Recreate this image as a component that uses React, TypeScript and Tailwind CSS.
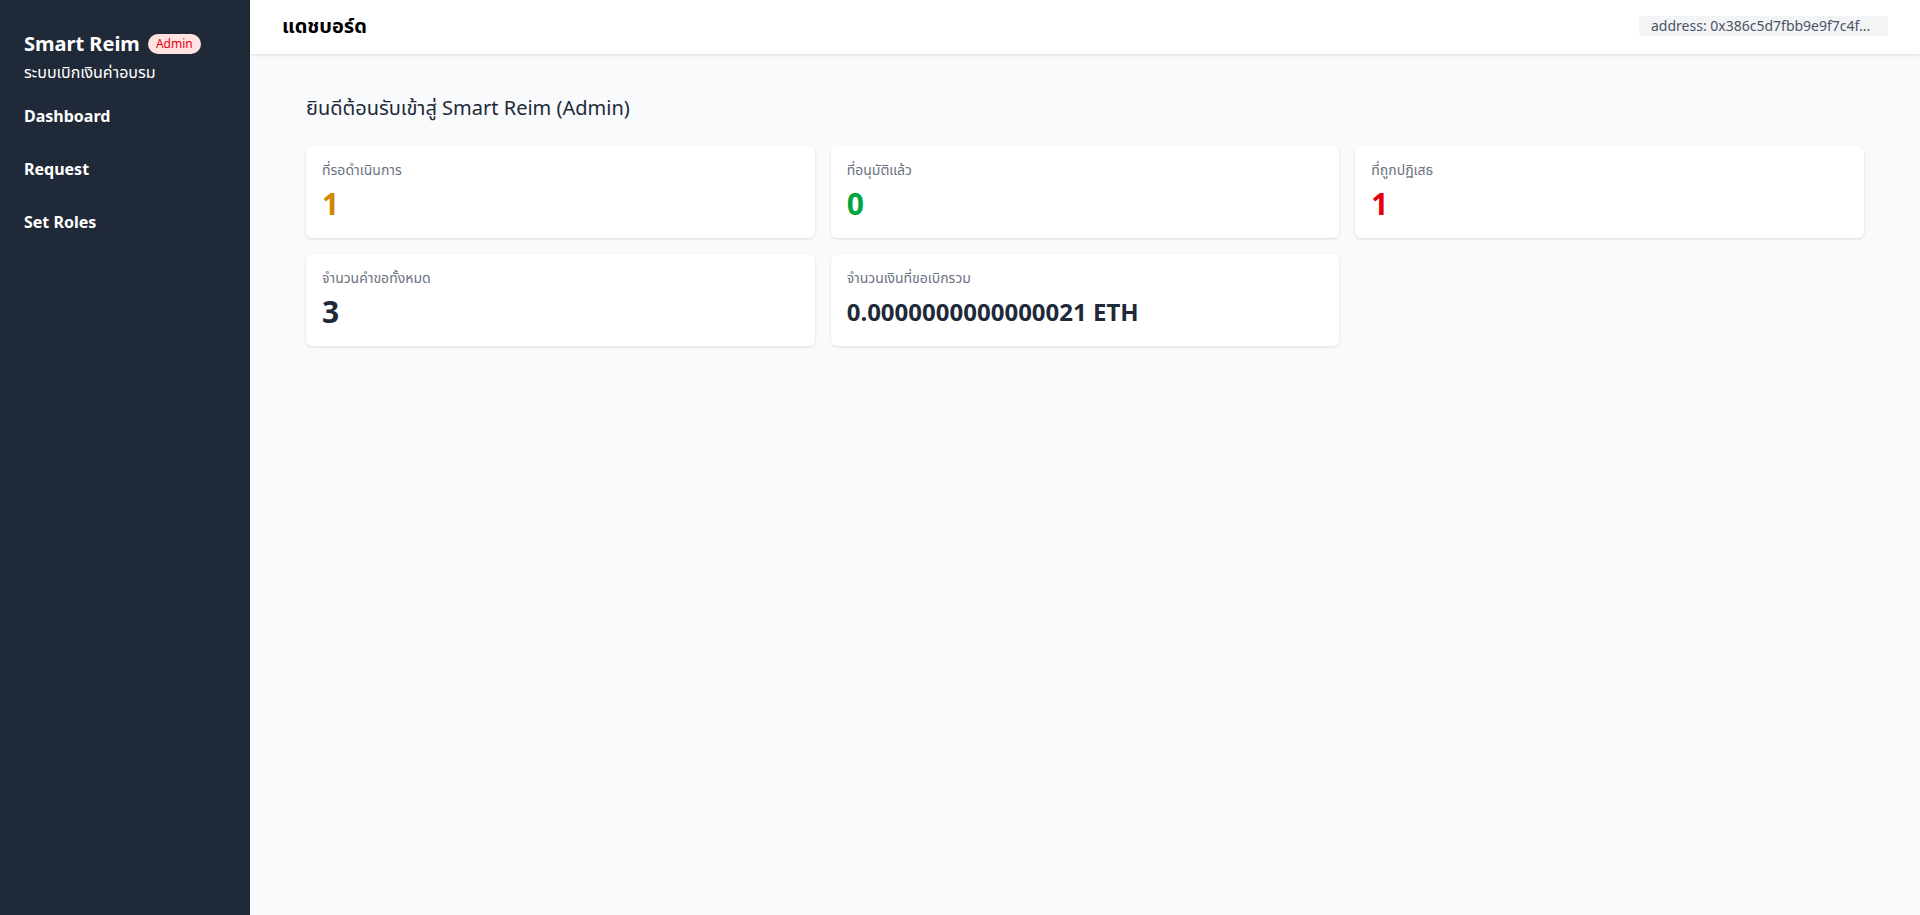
import React from "react";

function StatCard({ label, value, color, size }: { label: string; value: string; color: string; size: string }) {
  return (
    <div className="bg-white rounded-md shadow-[0_1px_3px_rgba(0,0,0,0.12)] p-4">
      <div className="text-sm leading-5 text-gray-500 -mt-[2px]">{label}</div>
      <div className={`mt-[6px] font-bold ${size} ${color}`}>{value}</div>
    </div>
  );
}

export default function App() {
  return (
    <div className="flex h-[915px] w-full" style={{ fontFamily: '"Noto Sans", "Noto Sans Thai", sans-serif' }}>
      <aside className="w-[250px] shrink-0 bg-[#1f2937] text-white px-6 pt-[30px]">
        <div className="flex items-center gap-2">
          <span className="text-xl font-bold leading-7">Smart Reim</span>
          <span className="rounded-full bg-red-100 text-red-600 text-xs leading-5 px-2">Admin</span>
        </div>
        <div className="text-base leading-6 mt-0.5">ระบบเบิกเงินค่าอบรม</div>
        <nav className="mt-5 flex flex-col gap-[29px]">
          <div className="font-bold text-base leading-6">Dashboard</div>
          <div className="font-bold text-base leading-6">Request</div>
          <div className="font-bold text-base leading-6">Set Roles</div>
        </nav>
      </aside>
      <div className="flex-1 flex flex-col bg-gray-50">
        <header className="h-[54px] bg-white shadow-[0_1px_3px_rgba(0,0,0,0.12)] flex items-center justify-between px-8">
          <h1 className="text-xl font-bold text-black -mt-[2px]">แดชบอร์ด</h1>
          <div className="bg-gray-100 rounded text-sm leading-5 text-gray-600 px-3 w-[249px] -mt-[2px]">address: 0x386c5d7fbb9e9f7c4f...</div>
        </header>
        <main className="px-14 pt-[40px]">
          <h2 className="text-xl text-gray-800 leading-7">ยินดีต้อนรับเข้าสู่ Smart Reim (Admin)</h2>
          <div className="grid grid-cols-3 gap-4 mt-[24px]">
            <StatCard label="ที่รอดำเนินการ" value="1" color="text-yellow-600" size="text-3xl" />
            <StatCard label="ที่อนุมัติแล้ว" value="0" color="text-green-600" size="text-3xl" />
            <StatCard label="ที่ถูกปฏิเสธ" value="1" color="text-red-600" size="text-3xl" />
            <StatCard label="จำนวนคำขอทั้งหมด" value="3" color="text-gray-800" size="text-3xl" />
            <StatCard label="จำนวนเงินที่ขอเบิกรวม" value="0.0000000000000021 ETH" color="text-gray-800" size="text-2xl leading-9" />
          </div>
        </main>
      </div>
    </div>
  );
}
